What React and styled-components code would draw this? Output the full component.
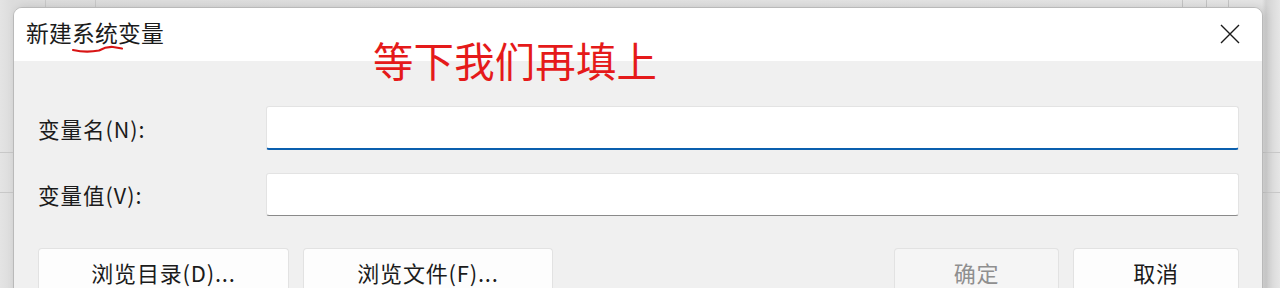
import React from "react";
import styled, { createGlobalStyle } from "styled-components";

const GlobalStyle = createGlobalStyle`
  html, body {
    margin: 0;
    padding: 0;
    background: #e9e9e9;
  }
  * {
    box-sizing: border-box;
  }
`;

const cjk = `"Noto Sans CJK SC", "Noto Sans", "Liberation Sans", sans-serif`;

const Backdrop = styled.div`
  position: relative;
  width: 1280px;
  height: 288px;
  overflow: hidden;
  padding: 7px 17px 0 13px;
  font-family: ${cjk};
  background:
    linear-gradient(90deg, transparent 45px, #c9c9c9 45px, #c9c9c9 46px, transparent 46px),
    linear-gradient(90deg, transparent 95px, #c9c9c9 95px, #c9c9c9 96px, transparent 96px),
    linear-gradient(90deg, transparent 1182px, #c4c4c4 1182px, #c4c4c4 1183px, transparent 1183px),
    linear-gradient(90deg, transparent 1206px, #c4c4c4 1206px, #c4c4c4 1207px, transparent 1207px),
    linear-gradient(90deg, transparent 1228px, #c4c4c4 1228px, #c4c4c4 1229px, transparent 1229px),
    linear-gradient(180deg, transparent 152px, #c8c8c8 152px, #c8c8c8 153px, transparent 153px),
    linear-gradient(180deg, transparent 192px, #c8c8c8 192px, #c8c8c8 193px, transparent 193px),
    linear-gradient(90deg, #e4e4e4 0, #dcdcdc 12px, #e4e4e4 1262px, #d2d2d2 1266px, #e6e6e6 1280px);
`;

const Dialog = styled.div`
  width: 1250px;
  height: 300px;
  background: #f0f0f0;
  border: 1px solid #b9b9b9;
  border-radius: 9px 9px 0 0;
  overflow: hidden;
  box-shadow: 3px 0 8px rgba(0, 0, 0, 0.12);
  display: flex;
  flex-direction: column;
`;

const TitleBar = styled.div`
  height: 53px;
  flex-shrink: 0;
  background: #ffffff;
  display: flex;
  align-items: center;
  justify-content: space-between;
  padding: 0 17px 0 12px;
`;

const Title = styled.span`
  font-size: 22.8px;
  color: #1b1b1b;
  letter-spacing: 0.2px;
  margin-top: -5px;
`;

const CloseButton = styled.button`
  width: 30px;
  height: 30px;
  border: none;
  background: transparent;
  padding: 0;
  display: flex;
  align-items: center;
  justify-content: center;
  margin-top: -1px;
`;

const Body = styled.div`
  padding: 45px 23px 0 24px;
  display: flex;
  flex-direction: column;
`;

const FieldRow = styled.div`
  display: grid;
  grid-template-columns: 228px 1fr;
  align-items: center;
  margin-bottom: ${(p) => p.$gap}px;
`;

const Label = styled.label`
  font-size: 21.5px;
  letter-spacing: 1px;
  color: #1b1b1b;
`;

const Input = styled.input`
  height: ${(p) => p.$h}px;
  width: 100%;
  background: #ffffff;
  border: 1px solid #e3e3e3;
  border-bottom: ${(p) => (p.$focused ? "2px solid #0a5fae" : "1px solid #8a8a8a")};
  border-radius: 3px;
  outline: none;
  font-family: ${cjk};
  font-size: 18px;
`;

const ButtonRow = styled.div`
  display: flex;
  align-items: flex-start;
  gap: 14px;
  margin-top: 9px;
`;

const Button = styled.button`
  width: ${(p) => p.$w}px;
  height: 50px;
  background: ${(p) => (p.$disabled ? "#f5f5f5" : "#fdfdfd")};
  border: 1px solid #e2e2e2;
  border-bottom-color: #d0d0d0;
  border-radius: 4px;
  font-family: ${cjk};
  font-size: 22px;
  letter-spacing: 0.8px;
  color: ${(p) => (p.$disabled ? "#8f8f8f" : "#1b1b1b")};
  padding: 0;
  padding-bottom: 2px;
`;

const Spacer = styled.div`
  flex: 1;
`;

const Annotation = styled.div`
  position: absolute;
  left: 373px;
  top: 36px;
  font-family: ${cjk};
  font-size: 40.4px;
  color: #e51a1a;
  letter-spacing: 0.2px;
  line-height: 1.2;
  pointer-events: none;
`;

const Scribble = styled.svg`
  position: absolute;
  left: 0;
  top: 0;
  pointer-events: none;
`;

export default function App() {
  return (
    <>
      <GlobalStyle />
      <Backdrop>
        <Dialog>
          <TitleBar>
            <Title>新建系统变量</Title>
            <CloseButton aria-label="关闭">
              <svg width="22" height="22" viewBox="0 0 22 22">
                <path d="M2 2 L20 20 M20 2 L2 20" stroke="#1a1a1a" strokeWidth="1.4" fill="none" />
              </svg>
            </CloseButton>
          </TitleBar>
          <Body>
            <FieldRow $gap={23}>
              <Label>变量名(N):</Label>
              <Input $h={44} $focused />
            </FieldRow>
            <FieldRow $gap={23}>
              <Label>变量值(V):</Label>
              <Input $h={43} />
            </FieldRow>
            <ButtonRow>
              <Button $w={251}>浏览目录(D)...</Button>
              <Button $w={250}>浏览文件(F)...</Button>
              <Spacer />
              <Button $w={165} $disabled>确定</Button>
              <Button $w={166}>取消</Button>
            </ButtonRow>
          </Body>
        </Dialog>
        <Annotation>等下我们再填上</Annotation>
        <Scribble width="200" height="70" viewBox="0 0 200 70">
          <path
            d="M73 50 Q 86 53 99 50.5 Q 106 46.5 113 47 L 122 48.5"
            stroke="#d81414"
            strokeWidth="2.2"
            fill="none"
            strokeLinecap="round"
          />
        </Scribble>
      </Backdrop>
    </>
  );
}
